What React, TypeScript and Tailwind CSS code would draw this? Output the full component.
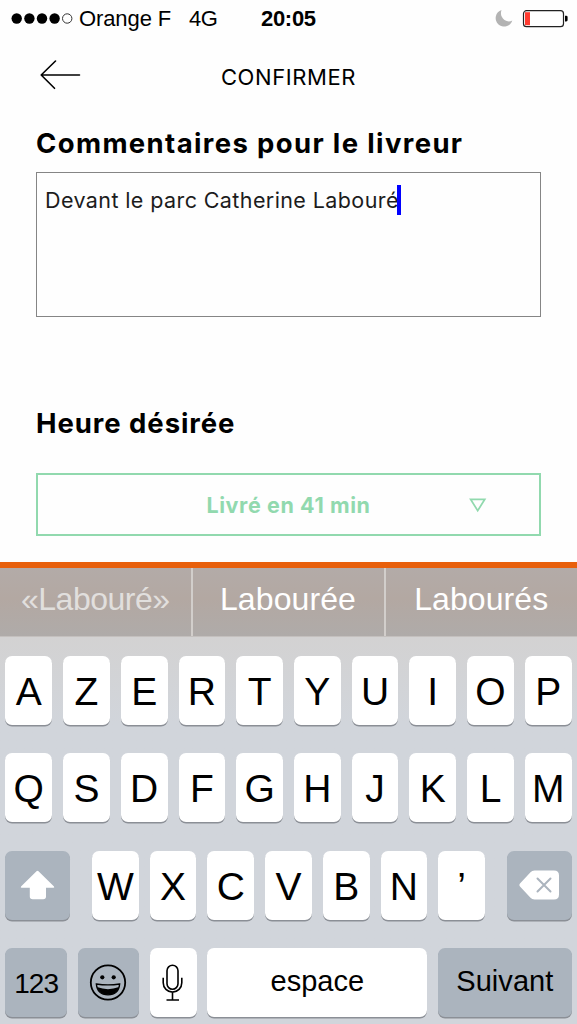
import type { ReactNode } from "react";

const letterKey =
  "flex h-[69px] w-[46.7px] shrink-0 items-center justify-center rounded-[7px] bg-white pt-[2px] font-['Liberation_Sans',sans-serif] text-[39px] leading-none text-black shadow-[0_1.5px_0_#8b8f96]";
const base =
  "flex h-[69px] shrink-0 items-center justify-center rounded-[7px] font-['Liberation_Sans',sans-serif] leading-none text-black shadow-[0_1.5px_0_#8b8f96]";

function Letters({ keys }: { keys: string }) {
  return (
    <>
      {keys.split("").map((k) => (
        <div key={k} className={letterKey}>
          {k}
        </div>
      ))}
    </>
  );
}

function Row({ children }: { children: ReactNode }) {
  return <div className="flex justify-between">{children}</div>;
}

function StatusBar() {
  return (
    <div className="flex h-[38px] items-center pr-[9px] pl-[11px] font-['Liberation_Sans',sans-serif] text-[22px] leading-none text-black">
      <svg width="62" height="14" viewBox="0 0 62 14">
        {[5.7, 18.4, 31, 43.6].map((x) => (
          <circle key={x} cx={x} cy="6.5" r="5.2" />
        ))}
        <circle cx="56.2" cy="6.5" r="4.7" fill="none" stroke="#333" strokeWidth="1" />
      </svg>
      <span className="ml-[6px] w-[110px] whitespace-nowrap tracking-[-0.1px]">Orange F</span>
      <span className="w-[72px] tracking-[-0.6px]">4G</span>
      <span className="font-bold tracking-[-0.3px]">20:05</span>
      <svg className="ml-auto" width="73" height="22" viewBox="0 0 73 22">
        <path d="M6.5 2A8.5 8.5 0 1 0 17.3 12.5Q13.5 14.6 9.5 12Q4.5 8 6.5 2Z" fill="#b3b3b3" />
        <rect x="28.5" y="2.7" width="40" height="16" rx="3" fill="#fff" stroke="#222" strokeWidth="1.2" />
        <rect x="30" y="4.2" width="5" height="13" fill="#ff3b30" />
        <path d="M70 7.7h1.2q1.4 0 1.4 1.4v3q0 1.4-1.4 1.4H70z" />
      </svg>
    </div>
  );
}

export default function App() {
  return (
    <div className="flex h-[1024px] w-[577px] flex-col overflow-hidden bg-[#fefefe] font-['Inter',sans-serif] text-black">
      <StatusBar />
      <header className="grid h-[76px] grid-cols-[1fr_auto_1fr] items-center px-[40px]">
        <svg width="42" height="32" viewBox="0 0 42 32" fill="none" stroke="#000" strokeWidth="1.6" strokeLinecap="round" strokeLinejoin="round">
          <path d="M15.5 1L1.2 15L14.5 28.3M1.2 15H39.5" />
        </svg>
        <h1 className="pt-[1px] text-[22px] leading-none tracking-[0.6px]">CONFIRMER</h1>
      </header>
      <main className="flex h-[447.5px] shrink-0 flex-col px-9">
        <h2 className="mt-[13px] h-[45px] text-[27.5px] leading-[32px] font-bold tracking-[1.36px] whitespace-nowrap">
          Commentaires pour le livreur
        </h2>
        <div className="flex h-[145px] items-start border border-[#858585] pt-[12px] pl-[8px]">
          <span className="-mt-[1px] text-[21.5px] leading-[32px] tracking-[0.4px] whitespace-nowrap text-[#1c1c1c]">
            Devant le parc Catherine Labouré
          </span>
          <span className="-ml-[2px] h-[30px] w-[4px] bg-[#0000ff]" />
        </div>
        <h2 className="mt-[90px] h-[66px] text-[27.5px] leading-[32px] font-bold tracking-[0.93px] whitespace-nowrap">
          Heure désirée
        </h2>
        <div className="grid h-[63px] grid-cols-[1fr_auto_1fr] items-center border-2 border-[#91d9ae] text-[#91d9ae]">
          <span />
          <span className="pt-[2px] text-[21.5px] leading-none font-bold tracking-[0.6px]">Livré en 41 min</span>
          <svg className="mt-[1px] ml-[98px]" width="18" height="15" viewBox="0 0 18 15" fill="none" stroke="currentColor" strokeWidth="1.7">
            <path d="M1.6 1.3H15.8L8.7 12.7Z" />
          </svg>
        </div>
      </main>
      <section className="flex flex-1 flex-col bg-linear-to-b from-[#d3d2d2] from-16% to-[#d1d5db] to-35%">
        <div className="h-[6.5px] shrink-0 bg-[#e8600c]" />
        <div className="grid h-[68.5px] shrink-0 grid-cols-[192.5px_193px_1fr] border-b border-[#c4c0be] bg-[linear-gradient(#b3aba8,#b3a8a2_45%,#afaba9)] text-center font-['Liberation_Sans',sans-serif] text-[32px] leading-[62px] text-white">
          <span className="border-r-2 border-[#d2cecb] tracking-[-0.5px] text-[#e1dfdd]">«Labouré»</span>
          <span className="border-r-2 border-[#d2cecb] tracking-[0.1px]">Labourée</span>
          <span className="tracking-[0.1px]">Labourés</span>
        </div>
        <div className="flex flex-col gap-[28.4px] px-[5.4px] pt-[19.5px]">
          <Row>
            <Letters keys="AZERTYUIOP" />
          </Row>
          <Row>
            <Letters keys="QSDFGHJKLM" />
          </Row>
          <Row>
            <div className={base + " w-[65px] bg-[#abb4be]"}>
              <svg width="35" height="30" viewBox="0 0 35 30" fill="#fff">
                <path d="M16.5 1.3Q17.5.2 18.5 1.3L34 16.6Q34.8 17.8 33.3 17.8H26V26.5Q26 29.3 23.2 29.3H12.7Q9.8 29.3 9.8 26.5V17.8H1.7Q.2 17.8 1 16.6Z" />
              </svg>
            </div>
            <div className="flex gap-[11px]">
              <Letters keys="WXCVBN’" />
            </div>
            <div className={base + " w-[65px] bg-[#abb4be]"}>
              <svg width="41" height="30" viewBox="0 0 41 30">
                <path d="M1 13.5L11.5 2.3Q13 .5 15.5.5H35Q40 .5 40 5.5V24.5Q40 29.5 35 29.5H15.5Q13 29.5 11.5 27.7L1 16.5Q-.2 15 1 13.5Z" fill="#fff" />
                <path d="M18.5 8.5L31.5 21.5M31.5 8.5L18.5 21.5" stroke="#abb4be" strokeWidth="2" strokeLinecap="round" />
              </svg>
            </div>
          </Row>
          <Row>
            <div className={base + " w-[61.5px] bg-[#abb4be] pt-[3px] text-[28px] tracking-[-0.9px]"}>123</div>
            <div className={base + " w-[61.5px] bg-[#abb4be]"}>
              <svg width="38" height="38" viewBox="0 0 38 38">
                <circle cx="19" cy="18.5" r="17.2" fill="none" stroke="#000" strokeWidth="1.8" />
                <circle cx="13.3" cy="13.3" r="2.1" />
                <circle cx="24.7" cy="13.3" r="2.1" />
                <path d="M7.3 20Q19 21.8 30.7 20Q29.7 30.8 19 30.8Q8.3 30.8 7.3 20Z" fill="none" stroke="#000" strokeWidth="1.3" />
                <path d="M8 23Q19 27.3 30 23Q27.5 30.8 19 30.8Q10.5 30.8 8 23Z" />
              </svg>
            </div>
            <div className={base + " w-[46.7px] bg-white"}>
              <svg width="24" height="38" viewBox="0 0 24 38" fill="none" stroke="#000" strokeWidth="1.6">
                <rect x="6" y="1.3" width="11" height="24" rx="5.5" />
                <path d="M2.2 13.8V18.8A9.3 9.3 0 0 0 20.8 18.8V13.8M11.5 28.2V36M5.5 36H18" />
              </svg>
            </div>
            <div className={base + " w-[220px] bg-white pb-[3px] text-[29px]"}>espace</div>
            <div className={base + " w-[133.5px] bg-[#abb4be] pb-[3px] text-[29px] tracking-[0.05px]"}>Suivant</div>
          </Row>
        </div>
      </section>
    </div>
  );
}
